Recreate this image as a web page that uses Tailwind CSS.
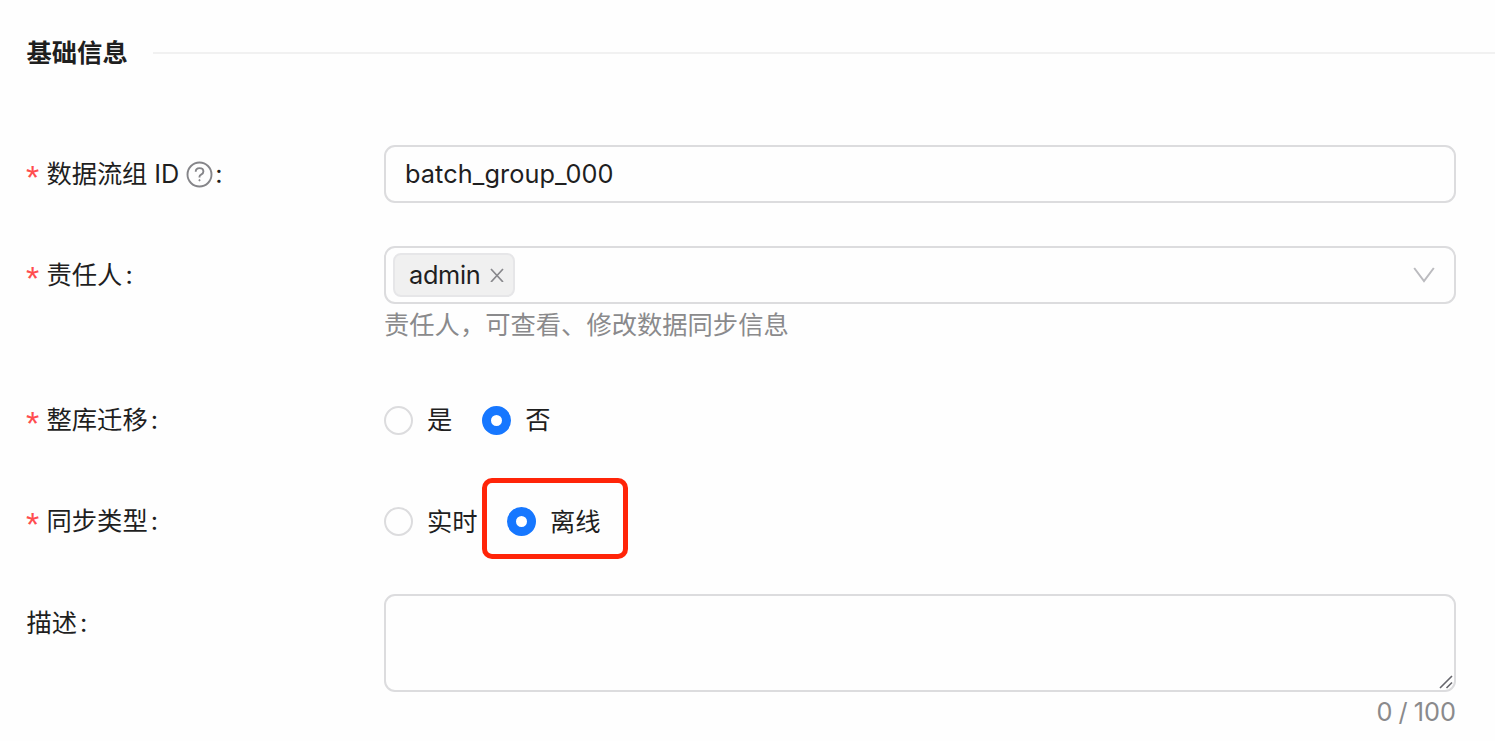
<!DOCTYPE html>
<html lang="zh-CN">
<head>
<meta charset="utf-8">
<title>基础信息</title>
<script src="https://cdn.jsdelivr.net/npm/@tailwindcss/browser@4"></script>
</head>
<body class="h-[741px] overflow-hidden bg-[#fefefe] font-['Inter','Noto_Sans_CJK_SC',sans-serif] text-[25.3px] text-[#1f1f1f]">
<main class="flex h-full flex-col pl-[26px]">
  <header class="mt-[33px] flex h-10 items-center gap-[25.5px]">
    <h1 class="pl-[0.5px] text-[25.3px] font-bold leading-10 whitespace-nowrap">基础信息</h1>
    <div class="h-[2px] flex-1 bg-[#f1f1f1]"></div>
  </header>

  <form class="mt-[72px] mr-[39px] flex flex-col">
    <div class="flex h-[58px] items-center">
      <div class="flex w-[358px] shrink-0 items-center whitespace-nowrap leading-10"><span class="w-[20.5px] pt-[6px] font-['Liberation_Sans',sans-serif] text-[34px] text-[#ff4d4f]">*</span><span class="tracking-[-0.1px]">数据流组 ID</span>
        <svg class="ml-[6.500px] size-[27px] text-[#858589]" viewBox="0 0 27 27" fill="none" stroke="currentColor" stroke-width="1.9"><circle cx="13.5" cy="13.5" r="12"/><path d="M9.700 10.800c0-2.200 1.600-3.700 3.800-3.700s3.900 1.400 3.900 3.400c0 1.700-1.100 2.600-2.300 3.200-1 .5-1.600 1-1.600 2.100v.7"/><circle cx="13.5" cy="19.2" r=".7" fill="currentColor" stroke-width=".8"/></svg>
        <span class="ml-[2.500px]">:</span></div>
      <div class="flex h-[58px] flex-1 items-center rounded-[11px] border-2 border-[#dcdcde] pl-[19px]"><span class="tracking-[0.08px]">batch_group_000</span></div>
    </div>

    <div class="mt-[43px] flex h-[58px] items-center">
      <div class="flex w-[358px] shrink-0 items-center whitespace-nowrap leading-10"><span class="w-[20.5px] pt-[6px] font-['Liberation_Sans',sans-serif] text-[34px] text-[#ff4d4f]">*</span><span>责任人</span><span class="ml-[3px]">:</span></div>
      <div class="flex h-[58px] flex-1 items-center justify-between rounded-[11px] border-2 border-[#dcdcde] pr-[19px] pl-[7px]">
        <div class="flex h-[44px] w-[122px] items-center justify-between rounded-[8px] border-2 border-[#e6e6e8] bg-[#f0f0f0] pr-[9px] pl-[14px]"><span class="tracking-[-0.3px]">admin</span>
          <svg class="size-[14px] text-[#88888c]" viewBox="0 0 14 14" fill="none" stroke="currentColor" stroke-width="1.7"><path d="M1 1l12 13M13 1L1 14"/></svg></div>
        <svg class="h-[16px] w-[22px] text-[#bbbbbf]" viewBox="0 0 22 16" fill="none" stroke="currentColor" stroke-width="2"><path d="M1.200 1l9.800 13L20.800 1"/></svg>
      </div>
    </div>
    <p class="ml-[358px] h-10 pt-[1px] leading-10 text-[#8a8a8c]">责任人，可查看、修改数据同步信息</p>

    <div class="mt-[55px] flex h-[42px] items-center">
      <div class="flex w-[358px] shrink-0 items-center whitespace-nowrap leading-10"><span class="w-[20.5px] pt-[6px] font-['Liberation_Sans',sans-serif] text-[34px] text-[#ff4d4f]">*</span><span>整库迁移</span><span class="ml-[3px]">:</span></div>
      <div class="flex items-center">
        <span class="size-[29px] rounded-full border-2 border-[#dcdcde]"></span><span class="ml-[14px]">是</span>
        <span class="ml-[30px] size-[29px] rounded-full border-[9px] border-[#1677ff] bg-white"></span><span class="ml-[14px]">否</span>
      </div>
    </div>

    <div class="mt-[59px] flex h-[42px] items-center">
      <div class="flex w-[358px] shrink-0 items-center whitespace-nowrap leading-10"><span class="w-[20.5px] pt-[6px] font-['Liberation_Sans',sans-serif] text-[34px] text-[#ff4d4f]">*</span><span>同步类型</span><span class="ml-[3px]">:</span></div>
      <div class="flex items-center">
        <span class="size-[29px] rounded-full border-2 border-[#dcdcde]"></span><span class="ml-[14px] w-[51px] pt-[2px] whitespace-nowrap">实时</span>
        <div class="-mt-[25px] -mb-[20px] ml-[4px] flex h-[81px] w-[146px] items-center rounded-[10px] border-[5px] border-[#ff2408] pt-[5px] pl-[20px]">
          <span class="size-[29px] rounded-full border-[9px] border-[#1677ff] bg-white"></span><span class="ml-[14px] pt-[2px] whitespace-nowrap">离线</span>
        </div>
      </div>
    </div>

    <div class="mt-[52px] flex">
      <div class="flex h-[58px] w-[358px] shrink-0 items-center pl-[0.5px] whitespace-nowrap leading-10"><span>描述</span><span class="ml-[3px]">:</span></div>
      <div class="flex h-[98px] flex-1 items-end justify-end rounded-[11px] border-2 border-[#dcdcde]">
        <svg class="size-[15px] text-[#66666c]" viewBox="0 0 15 15" fill="none" stroke="currentColor" stroke-width="1.6"><path d="M1 13L13 1M7.500 13L13 7.500"/></svg>
      </div>
    </div>
    <div class="text-right leading-10 [word-spacing:-1px] text-[#8a8a8c]">0 / 100</div>
  </form>
</main>
</body>
</html>
